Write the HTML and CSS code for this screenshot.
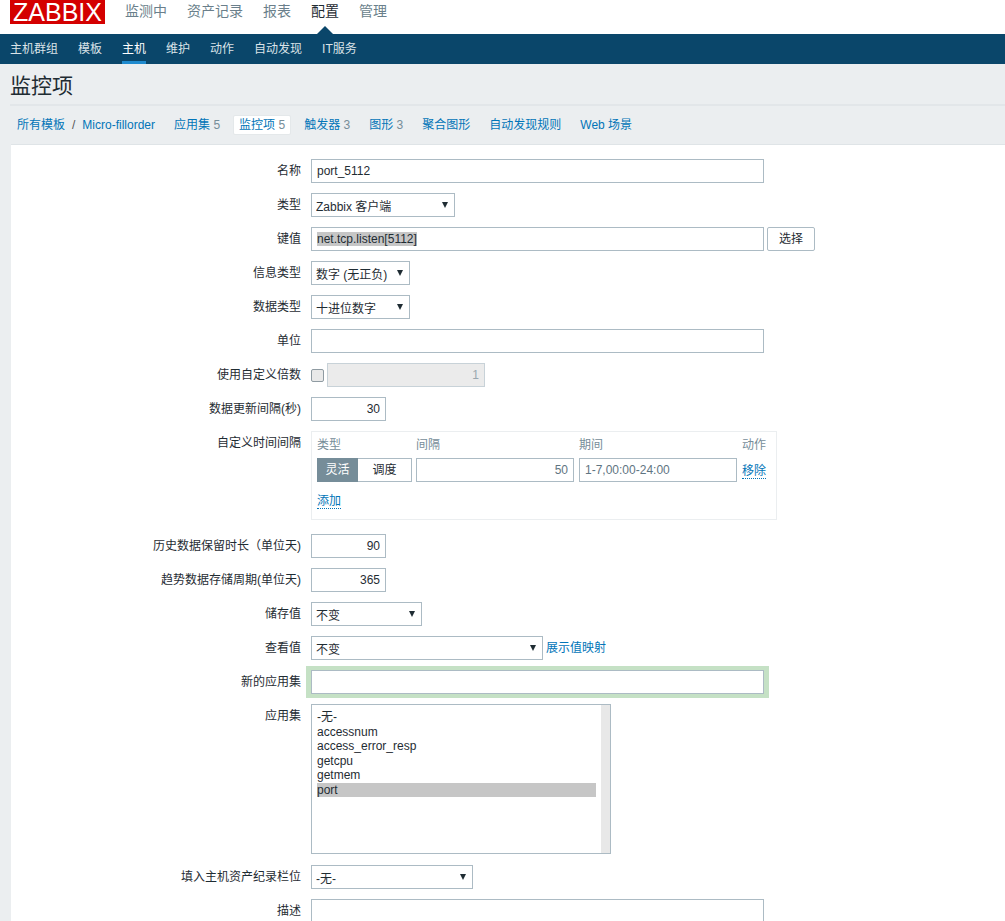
FILE: index.html
```html
<!DOCTYPE html>
<html lang="zh">
<head>
<meta charset="utf-8">
<title>监控项</title>
<link rel="stylesheet" href="styles.css">
</head>
<body>
<header class="top">
  <a class="logo">ZABBIX</a>
  <nav class="menu">
    <a>监测中</a><a>资产记录</a><a>报表</a><a class="current">配置</a><a>管理</a>
  </nav>
</header>
<nav class="subnav">
  <a>主机群组</a><a>模板</a><a class="current">主机</a><a>维护</a><a>动作</a><a>自动发现</a><a>IT服务</a>
</nav>
<h1 class="title">监控项</h1>
<div class="tabs">
  <div class="crumbs"><a>所有模板</a><span class="sep">/</span><a>Micro-fillorder</a></div>
  <div class="tab"><a>应用集</a> <span class="num">5</span></div>
  <div class="tab active"><a>监控项</a> <span class="num">5</span></div>
  <div class="tab"><a>触发器</a> <span class="num">3</span></div>
  <div class="tab"><a>图形</a> <span class="num">3</span></div>
  <div class="tab"><a>聚合图形</a></div>
  <div class="tab"><a>自动发现规则</a></div>
  <div class="tab"><a>Web 场景</a></div>
</div>
<main class="panel">
  <form class="form">
    <label class="lbl">名称</label>
    <div class="ctl"><input class="field w-453" value="port_5112"></div>

    <label class="lbl">类型</label>
    <div class="ctl"><span class="pick w-144"><select><option>Zabbix 客户端</option></select></span></div>

    <label class="lbl">键值</label>
    <div class="ctl">
      <div class="field w-453 keyval"><span class="hl">net.tcp.listen[5112]</span></div>
      <button type="button" class="btn">选择</button>
    </div>

    <label class="lbl">信息类型</label>
    <div class="ctl"><span class="pick w-99"><select><option>数字 (无正负)</option></select></span></div>

    <label class="lbl">数据类型</label>
    <div class="ctl"><span class="pick w-99"><select><option>十进位数字</option></select></span></div>

    <label class="lbl">单位</label>
    <div class="ctl"><input class="field w-453"></div>

    <label class="lbl">使用自定义倍数</label>
    <div class="ctl">
      <span class="check"></span>
      <input class="field num-in off w-158" value="1" disabled>
    </div>

    <label class="lbl">数据更新间隔(秒)</label>
    <div class="ctl"><input class="field num-in w-75" value="30"></div>

    <label class="lbl">自定义时间间隔</label>
    <div class="intervals">
      <span class="th">类型</span><span class="th">间隔</span><span class="th">期间</span><span class="th">动作</span>
      <div class="seg"><span class="on">灵活</span><span>调度</span></div>
      <input class="field soft num-in" value="50">
      <input class="field soft period" value="1-7,00:00-24:00">
      <a class="dot">移除</a>
      <a class="dot add">添加</a>
    </div>

    <label class="lbl">历史数据保留时长（单位天)</label>
    <div class="ctl"><input class="field num-in w-75" value="90"></div>

    <label class="lbl">趋势数据存储周期(单位天)</label>
    <div class="ctl"><input class="field num-in w-75" value="365"></div>

    <label class="lbl">储存值</label>
    <div class="ctl"><span class="pick w-111"><select><option>不变</option></select></span></div>

    <label class="lbl">查看值</label>
    <div class="ctl">
      <span class="pick w-232"><select><option>不变</option></select></span>
      <a class="maplink">展示值映射</a>
    </div>

    <label class="lbl">新的应用集</label>
    <div class="ctl"><input class="field w-453 glow"></div>

    <label class="lbl">应用集</label>
    <div class="listbox">
      <ul>
        <li>-无-</li><li>accessnum</li><li>access_error_resp</li><li>getcpu</li><li>getmem</li><li class="sel">port</li>
      </ul>
      <span class="track"></span>
    </div>

    <label class="lbl low">填入主机资产纪录栏位</label>
    <div class="ctl low"><span class="pick w-162"><select><option>-无-</option></select></span></div>

    <label class="lbl">描述</label>
    <div class="ctl"><div class="field w-453 memo"></div></div>
  </form>
</main>
</body>
</html>
```
FILE: styles.css
```css
* { box-sizing: border-box; }
html, body { height: 921px; overflow: hidden; }
body {
  margin: 0;
  background: #ebeef0;
  color: #1f2c33;
  font: 12px/14px "Liberation Sans", "Noto Sans CJK SC", sans-serif;
}
a { color: #0275b8; text-decoration: none; }

.top {
  height: 34px;
  background: #fff;
  display: flex;
  align-items: flex-start;
  padding-left: 10px;
  gap: 20px;
}
.logo {
  width: 95px;
  height: 24px;
  background: #d40000;
  color: #fff;
  font-size: 25px;
  line-height: 24px;
  text-align: center;
}
.menu { display: flex; gap: 20px; }
.menu a {
  position: relative;
  height: 34px;
  font-size: 14px;
  line-height: 22px;
  color: #6a7f8b;
}
.menu a.current { color: #1f2c33; }
.menu a.current::after {
  content: "";
  position: absolute;
  left: 6px;
  bottom: 0;
  border: 8px solid transparent;
  border-top: 0;
  border-bottom-color: #0a466a;
}
.subnav {
  height: 30px;
  background: #0a466a;
  display: flex;
  gap: 20px;
  padding-left: 10px;
}
.subnav a {
  color: #dbe3e8;
  line-height: 30px;
  height: 30px;
}
.subnav a.current {
  color: #fff;
  border-bottom: 3px solid #1f8ace;
}
.title {
  margin: 0 0 0 10px;
  height: 42px;
  border-bottom: 2px solid #e2e6e9;
  font-size: 21px;
  font-weight: 400;
  line-height: 43px;
}
.tabs {
  display: flex;
  align-items: center;
  gap: 7px;
  height: 38px;
  padding-left: 11px;
}
.crumbs { padding: 0 6px; }
.sep { margin: 0 7px; color: #555; }
.tab { padding: 3px 6px; border-radius: 2px; height: 20px; }
.tab.active { background: #fff; border: 1px solid #e4e8ea; padding: 2px 5px; }
.num { color: #768d99; }
.panel {
  margin-left: 11px;
  height: 780px;
  background: #fff;
  border-top: 1px solid #dfe4e7;
  padding-top: 14px;
}
.form {
  display: grid;
  grid-template-columns: 290px 1fr;
  column-gap: 10px;
  row-gap: 10px;
  align-items: start;
}
.lbl {
  text-align: right;
  line-height: 24px;
  color: #1f2c33;
}
.ctl {
  display: flex;
  align-items: center;
  height: 24px;
}
.low { margin-top: 1px; }
.field {
  height: 24px;
  border: 1px solid #acbbc4;
  background: #fff;
  color: #1f2c33;
  font: inherit;
  padding: 0 5px;
  outline: 0;
  border-radius: 0;
}
.num-in { text-align: right; }
.w-453 { width: 453px; }
.w-158 { width: 158px; }
.w-75 { width: 75px; }
.w-99 { width: 99px; }
.w-111 { width: 111px; }
.w-144 { width: 144px; }
.w-162 { width: 162px; }
.w-232 { width: 232px; }
.keyval { line-height: 22px; }
.hl { background: #c6c6c6; display: inline-block; line-height: 14px; }
.memo { height: 40px; flex: none; align-self: flex-start; }
.btn {
  height: 24px;
  width: 48px;
  margin-left: 3px;
  background: #fff;
  border: 1px solid #acbbc4;
  border-radius: 2px;
  color: #1f2c33;
  font: inherit;
  padding: 0;
}
.pick {
  position: relative;
  display: block;
  height: 24px;
}
.pick select {
  appearance: none;
  width: 100%;
  height: 24px;
  border: 1px solid #acbbc4;
  background: #fff;
  color: #1f2c33;
  font: inherit;
  padding: 4px 0 0 4px;
  border-radius: 0;
  outline: 0;
}
.pick::after {
  content: "";
  position: absolute;
  right: 7px;
  top: 9px;
  border: 3.5px solid transparent;
  border-bottom: 0;
  border-top: 6px solid #1f2c33;
  pointer-events: none;
}
.check {
  width: 13px;
  height: 13px;
  border: 1px solid #8f9ba2;
  border-radius: 2px;
  background: #e9e9e9;
  margin-right: 3px;
}
.off {
  background: #ebebeb;
  border-color: #c8d2d8;
  color: #9aa7af;
}
.intervals {
  width: 466px;
  height: 89px;
  margin-bottom: 4px;
  border: 1px solid #ebeef0;
  padding: 5px 5px 0;
  display: grid;
  grid-template-columns: 95px 162px 163px auto;
  grid-template-rows: 21px 24px 38px;
  align-items: center;
}
.th { color: #768d99; line-height: 14px; align-self: start; padding-top: 1px; }
.th:nth-child(2) { margin-left: 4px; }
.th:nth-child(3), .th:nth-child(4) { margin-left: 5px; }
.seg {
  display: flex;
  width: 95px;
  height: 24px;
  border: 1px solid #acbbc4;
}
.seg span { flex: 1; text-align: center; line-height: 22px; }
.seg .on {
  flex: none;
  width: 41px;
  margin: -1px 0 -1px -1px;
  line-height: 24px;
  background: #768d99;
  color: #fff;
}
.soft { color: #5f7582; width: 158px; margin-left: 4px; }
.period { margin-left: 5px; }
.dot {
  border-bottom: 1px dotted #0275b8;
  justify-self: start;
  line-height: 14px;
  margin: 2px 0 0 5px;
}
.add { grid-column: 1; grid-row: 3; margin: 0; }
.maplink { margin-left: 3px; }
.glow { box-shadow: 0 0 0 4px #c5e1c5, 1px 0 0 4px #c5e1c5, -1px 0 0 4px #c5e1c5; }
.listbox {
  position: relative;
  width: 300px;
  height: 150px;
  border: 1px solid #acbbc4;
  background: #fff;
}
.listbox ul {
  list-style: none;
  margin: 0;
  padding: 5px 14px 0 5px;
  line-height: 14.5px;
}
.listbox .sel { background: #c6c6c6; }
.track {
  position: absolute;
  top: 0;
  right: 0;
  bottom: 0;
  width: 9px;
  background: #e8e8e8;
}
```
